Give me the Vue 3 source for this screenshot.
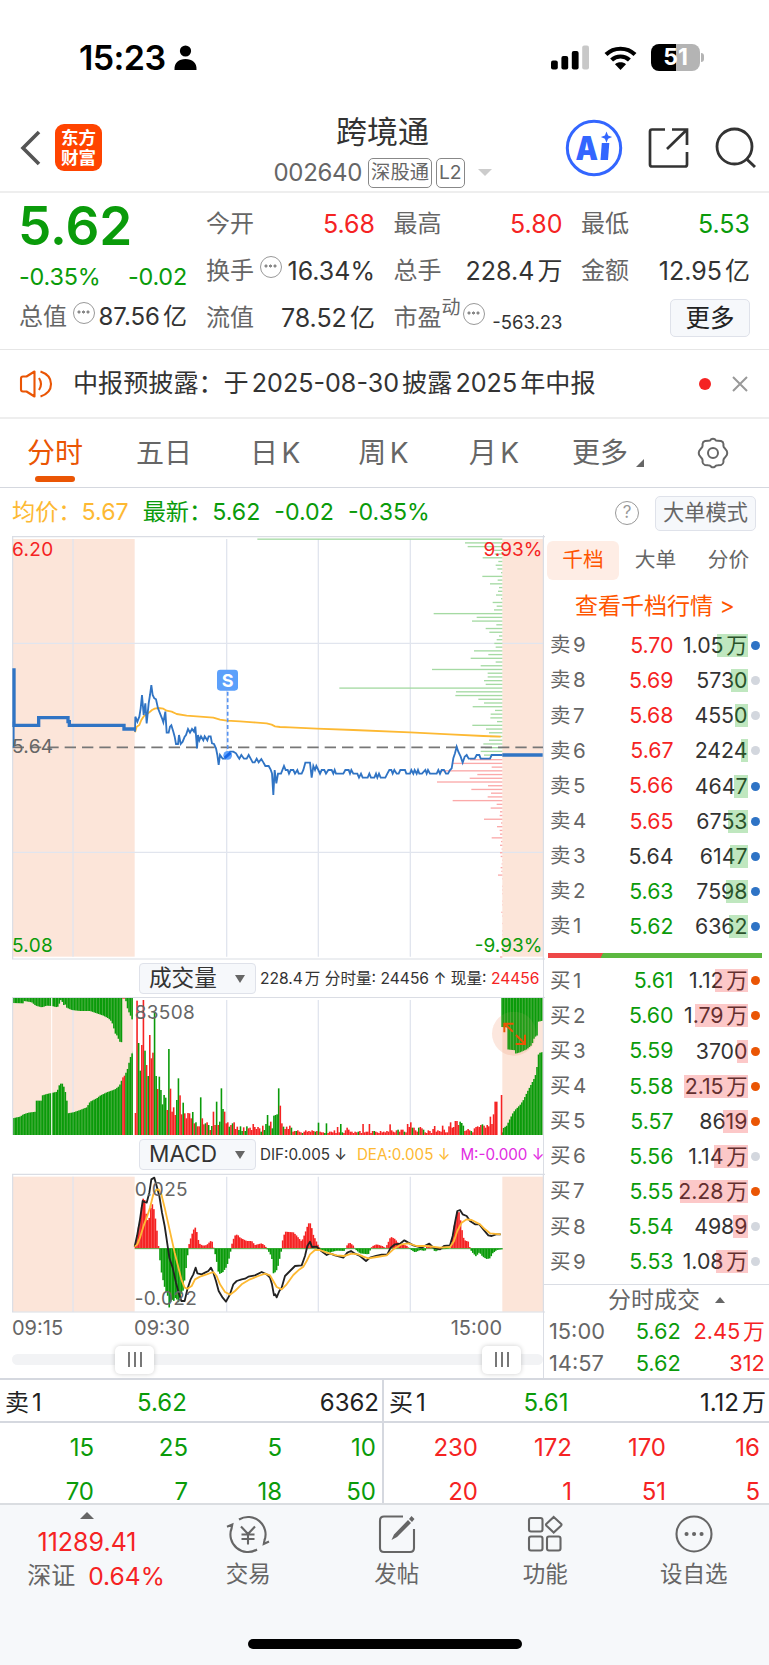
<template>
    <div class="phone">
        <!-- Status bar -->
        <div class="status">
            <div class="status-left">
                <span class="clock">15:23</span>
                <svg width="23" height="25" viewBox="0 0 23 25">
                    <circle cx="11.5" cy="6" r="5.6" />
                    <path d="M0.5 25C0 17.5 5 14 11.5 14S23 17.5 22.5 25Z" />
                </svg>
            </div>
            <div class="status-right">
                <svg width="38" height="25" viewBox="0 0 38 25">
                    <rect x="0" y="15.5" width="6.8" height="9" rx="2" />
                    <rect x="10.4" y="11" width="6.8" height="13.5" rx="2" />
                    <rect x="20.8" y="6" width="6.8" height="18.5" rx="2" />
                    <rect x="31.2" y="0.5" width="6.8" height="24" rx="2" fill="#c8c8c8" />
                </svg>
                <svg class="wifi" width="33" height="24" viewBox="0 0 33 24">
                    <path
                        d="M2 8.6C10 0.8 23 0.8 31 8.6M7.6 14.1C12.6 9.3 20.4 9.3 25.4 14.1"
                        fill="none"
                        stroke="#000"
                        stroke-width="4.2"
                    />
                    <path d="M11 18.2C14 15.6 19 15.6 22 18.2L16.5 24Z" />
                </svg>
                <div class="battery"><span>51</span></div>
                <i class="battery-tip"></i>
            </div>
        </div>

        <!-- Title bar -->
        <header class="header">
            <svg class="back" width="22" height="36" viewBox="0 0 22 36">
                <path d="M19 2L3 18L19 34" fill="none" stroke="#555" stroke-width="3.6" />
            </svg>
            <div class="logo">东方<br />财富</div>
            <div class="title">
                <h1>跨境通</h1>
                <p>
                    <span>002640</span>
                    <b>深股通</b>
                    <b class="lv">L2</b>
                    <i class="tri-down"></i>
                </p>
            </div>
            <svg class="ai" width="58" height="58" viewBox="0 0 58 58">
                <circle cx="29" cy="29" r="26.7" fill="#fff" stroke="#3366ff" stroke-width="3" />
                <text x="10.5" y="41" textLength="22.500" lengthAdjust="spacingAndGlyphs" class="ai-text">A</text>
                <path d="M36.800 24h7.500l-1.300 17h-7.500z" fill="#3366ff" />
                <path d="M41.500 12.500l1.600 4 4 1.600-4 1.600-1.600 4-1.600-4-4-1.600 4-1.600z" fill="#3366ff" />
            </svg>
            <svg class="share" width="42" height="42" viewBox="0 0 42 42">
                <path
                    d="M17 2.5H4Q2 2.5 2 4.5V37.5Q2 39.5 4 39.5H37Q39 39.5 39 37.5V25M24 2.5H39V18M39 2.5L19 22"
                    fill="none"
                    stroke="#333"
                    stroke-width="2.7"
                />
            </svg>
            <svg class="search" width="42" height="42" viewBox="0 0 42 42">
                <circle cx="19.5" cy="19.5" r="17.5" fill="none" stroke="#333" stroke-width="2.8" />
                <path d="M31 31.5L40 40" stroke="#333" stroke-width="3" />
            </svg>
        </header>

        <!-- Quote summary -->
        <section class="quote">
            <div class="quote-main">
                <div class="price">5.62</div>
                <div class="change"><span>-0.35%</span><span>-0.02</span></div>
                <div class="item cap">
                    <label>总值</label><i class="dots"></i><span class="val">87.56亿</span>
                </div>
            </div>
            <div class="quote-grid">
                <div v-for="q in quotes" :key="q.label" class="item">
                    <label>{{ q.label }}<sup v-if="q.sup">{{ q.sup }}</sup></label>
                    <i v-if="q.dots" class="dots"></i>
                    <span class="val" :class="[q.tone, { small: q.small }]">{{ q.value }}</span>
                </div>
                <div class="item"><button class="more">更多</button></div>
            </div>
        </section>

        <!-- Notice -->
        <section class="notice">
            <svg width="34" height="30" viewBox="0 0 34 30">
                <path
                    d="M15.5 2.5V27.5L7.5 22.5H4Q2 22.5 2 20.5V9.5Q2 7.5 4 7.5H7.5ZM20 9Q24 15 20 21M21.500 2.500Q32 6 32 15T21.500 27.500"
                    fill="none"
                    stroke="#ea5504"
                    stroke-width="2.1"
                    stroke-linejoin="round"
                />
            </svg>
            <p>中报预披露：于2025-08-30披露2025年中报</p>
            <i class="unread"></i>
            <svg class="close" width="16" height="16" viewBox="0 0 16 16">
                <path d="M1 1L15 15M15 1L1 15" stroke="#999" stroke-width="2" />
            </svg>
        </section>

        <!-- Period tabs -->
        <nav class="tabs">
            <span v-for="(t, i) in tabs" :key="t" :class="{ active: i === 0 }">{{ t }}</span>
            <i class="corner"></i>
            <svg width="32" height="32" viewBox="0 0 32 32">
                <path
                    d="M11.200 3.800Q13.200 3.800 14 2.400Q16 1 18 2.400Q18.800 3.800 20.800 3.800L24 4Q26.200 4.600 26.500 7Q26 9.500 27.500 11L29.800 14Q30.600 16 29.800 18L27.500 21Q26 22.500 26.500 25Q26.200 27.400 24 28L20.800 28.200Q18.800 28.200 18 29.600Q16 31 14 29.600Q13.200 28.200 11.200 28.200L8 28Q5.800 27.400 5.500 25Q6 22.500 4.500 21L2.200 18Q1.400 16 2.200 14L4.500 11Q6 9.500 5.500 7Q5.800 4.600 8 4Z"
                    fill="none"
                    stroke="#666"
                    stroke-width="2"
                />
                <circle cx="16" cy="16" r="5" fill="none" stroke="#666" stroke-width="2" />
            </svg>
        </nav>

        <div class="info">
            <span class="avg">均价：5.67</span>
            <span>最新：5.62</span>
            <span>-0.02</span>
            <span>-0.35%</span>
            <em>?</em>
            <button>大单模式</button>
        </div>

        <!-- Charts and order book -->
        <section class="body">
            <div class="charts">
                <!-- the charts are drawn in a space three times their displayed size -->
                <svg class="chart-price" viewBox="36 0 1599 1275">
                    <rect x="39" y="12" width="365" height="1253" class="auction" />
                    <rect x="1507" y="12" width="123" height="1253" class="auction" />
                    <path d="M219 12V1265M680 12V1265M955 12V1265M1231 12V1265M38 325H1630M38 952H1630" class="grid" />
                    <path d="M36 5H1635M38 5V1272M36 1272H1635" class="frame" />
                    <path d="M1630 5V1275" class="frame" />
                    <rect v-for="(w, i) in sells" :key="'s' + i" :x="1507 - w" :y="10.5 + i * 11.17" :width="w" height="4" class="depth-sell" />
                    <rect v-for="(w, i) in buys" :key="'b' + i" :x="1507 - w" :y="672 + i * 11.17" :width="w" height="4" class="depth-buy" />
                    <path d="M38 637H1630" class="base" />
                    <polyline :points="avgLine" class="line-avg" />
                    <path d="M42 400V571H116V548H204V560H208V571H372V582H405M1507 660H1628" class="line-thick" />
                    <path d="M41 560V637" class="line-price" />
                    <polyline :points="priceLine" class="line-price" />
                    <path d="M683 470V645" class="mark-line" />
                    <circle cx="683" cy="661" r="13" fill="#5ca0fb" />
                    <path d="M674 669L692 653" stroke="#1768e8" stroke-width="9" />
                    <rect x="651" y="404" width="63" height="63" rx="10" fill="#5ca0fb" />
                    <text x="683" y="456" class="mark">S</text>
                    <text x="36" y="62" class="label up">6.20</text>
                    <text x="36" y="655" class="label">5.64</text>
                    <text x="36" y="1250" class="label down">5.08</text>
                    <text x="1627" y="62" class="label up end">9.93%</text>
                    <text x="1627" y="1250" class="label down end">-9.93%</text>
                </svg>

                <div class="panel-head">
                    <div class="select">成交量<i></i></div>
                    <p class="vol-info">228.4万 分时量: 24456 ↑ 现量: <b>24456</b></p>
                </div>
                <svg class="chart-vol" viewBox="36 126 1599 417">
                    <rect x="39" y="128" width="360" height="412" class="auction" />
                    <rect x="1507" y="128" width="123" height="412" class="auction" />
                    <path d="M219 128V540M680 135V540M955 135V540M1231 135V540" class="grid" />
                    <circle cx="1542" cy="236" r="66" fill="#f5b393" opacity=".22" />
                    <rect v-for="(b, i) in auctionBars" :key="'a' + i" v-bind="b" />
                    <path d="M155 128V540" stroke="#fff" stroke-width="3" />
                    <rect v-for="(b, i) in volumeBars" :key="'v' + i" v-bind="b" />
                    <path d="M36 127H1635M38 127V540M1630 127V540" class="frame" />
                    <circle cx="1542" cy="236" r="66" fill="#f5b393" opacity=".1" />
                    <path d="M1539 230L1513 206M1513 232V206H1541M1548 240L1575 266M1547 267H1575V239" class="expand" />
                    <text x="404" y="192" class="label">83508</text>
                </svg>

                <div class="panel-head">
                    <div class="select">MACD<i></i></div>
                    <p class="macd-info">
                        <span>DIF:0.005 ↓</span><span class="dea">DEA:0.005 ↓</span><span class="m">M:-0.000 ↓</span>
                    </p>
                </div>
                <svg class="chart-macd" viewBox="36 651 1599 420">
                    <rect x="39" y="662" width="365" height="405" class="auction" />
                    <rect x="1507" y="662" width="123" height="405" class="auction" />
                    <path d="M219 662V1067M680 662V1067M955 662V1067M1231 662V1067" class="grid" />
                    <path d="M36 655H1635M38 655V1068M36 1068H1635M1630 655V1068" class="frame" />
                    <rect v-for="(b, i) in macdBars" :key="i" v-bind="b" />
                    <path d="M404 878H1507" stroke="#0a9b0a" stroke-width="2" />
                    <polyline :points="difLine" class="line-dif" />
                    <polyline :points="deaLine" class="line-avg" />
                    <text x="404" y="719" class="label">0.025</text>
                    <text x="404" y="1047" class="label">-0.022</text>
                </svg>

                <div class="times"><span>09:15</span><span>09:30</span><span>15:00</span></div>
                <div class="slider">
                    <div class="thumb"><i></i><i></i><i></i></div>
                    <div class="thumb"><i></i><i></i><i></i></div>
                </div>
            </div>

            <aside class="book">
                <div class="book-tabs"><b>千档</b><span>大单</span><span>分价</span></div>
                <div class="book-link">查看千档行情 &gt;</div>
                <div v-for="r in asks" :key="r[0]" class="row">
                    <label>{{ r[0] }}</label>
                    <span :class="r[2]">{{ r[1] }}</span>
                    <span class="qty">{{ r[3] }}<i :style="{ width: r[4] + 'px' }"></i></span>
                    <i class="dot" :class="{ blue: r[5] }"></i>
                </div>
                <div class="ratio"></div>
                <div v-for="r in bids" :key="r[0]" class="row bid">
                    <label>{{ r[0] }}</label>
                    <span class="down">{{ r[1] }}</span>
                    <span class="qty">{{ r[2] }}<i :style="{ width: r[3] + 'px' }"></i></span>
                    <i class="dot" :class="{ orange: r[4] }"></i>
                </div>
                <div class="deals">
                    <h3>分时成交<i></i></h3>
                    <p><span>15:00</span><span class="down">5.62</span><span class="up">2.45万</span></p>
                    <p><span>14:57</span><span class="down">5.62</span><span class="up">312</span></p>
                </div>
            </aside>
        </section>

        <!-- Queues at best ask and bid -->
        <section class="queues">
            <div v-for="q in queues" :key="q.name" class="queue" :class="q.tone">
                <div class="queue-head">
                    <span>{{ q.name }}</span><span class="down">{{ q.price }}</span><span>{{ q.total }}</span>
                </div>
                <div class="queue-grid">
                    <span v-for="(n, i) in q.list" :key="i">{{ n }}</span>
                </div>
            </div>
        </section>

        <!-- Bottom bar -->
        <footer class="bottom">
            <div class="index">
                <i></i>
                <strong>11289.41</strong>
                <p><span>深证</span>0.64%</p>
            </div>
            <div class="tool">
                <svg width="44" height="40" viewBox="0 0 44 40">
                    <path d="M13 5.500A17.500 17.500 0 0 1 38.300 27M31 35.500A17.500 17.500 0 0 1 5.700 14M1 12.700L6.300 10.500L5.300 15.500M43 27.500L37.800 30L38.700 25M15 12.500L22 20L29 12.500M22 20V30.500M15.500 20.500H28.500M15.500 25H28.500" />
                </svg>
                <span>交易</span>
            </div>
            <div class="tool">
                <svg width="44" height="40" viewBox="0 0 44 40">
                    <path d="M28 2.500H9Q5 2.500 5 6.500V34Q5 38 9 38H35Q39 38 39 34V15" />
                    <path d="M36.500 2L39.500 5L37 8L34 5ZM33 6L36 9L22 23L16.500 26L19 20.500Z" fill="#666" stroke="none" />
                </svg>
                <span>发帖</span>
            </div>
            <div class="tool">
                <svg width="44" height="40" viewBox="0 0 44 40">
                    <rect x="6" y="4" width="13.500" height="13.500" rx="2" />
                    <rect x="6" y="22.500" width="13.500" height="14" rx="2" />
                    <rect x="24" y="22.500" width="13.500" height="14" rx="2" />
                    <path d="M30.700 3L38 9.700Q39 10.700 38 11.700L30.700 18.500L23.500 11.700Q22.500 10.700 23.500 9.700Z" />
                </svg>
                <span>功能</span>
            </div>
            <div class="tool">
                <svg width="44" height="40" viewBox="0 0 44 40">
                    <circle cx="22" cy="20" r="17.500" />
                    <path d="M14.500 20h.1M22 20h.1M29.500 20h.1" stroke-width="4" stroke-linecap="round" />
                </svg>
                <span>设自选</span>
            </div>
            <div class="home"></div>
        </footer>
    </div>
</template>

<script setup>
const RED = "#f52323";
const GREEN = "#0a9b0a";

const tabs = ["分时", "五日", "日K", "周K", "月K", "更多"];

const quotes = [
    { label: "今开", value: "5.68", tone: "up" },
    { label: "最高", value: "5.80", tone: "up" },
    { label: "最低", value: "5.53", tone: "down" },
    { label: "换手", value: "16.34%", dots: true },
    { label: "总手", value: "228.4万" },
    { label: "金额", value: "12.95亿" },
    { label: "流值", value: "78.52亿" },
    { label: "市盈", sup: "动", value: "-563.23", dots: true, small: true },
];

// name, price, tone, quantity, bar width, highlighted dot
const asks = [
    ["卖9", "5.70", "up", "1.05万", 31, true],
    ["卖8", "5.69", "up", "5730", 17, false],
    ["卖7", "5.68", "up", "4550", 13, false],
    ["卖6", "5.67", "up", "2424", 7, false],
    ["卖5", "5.66", "up", "4647", 14, true],
    ["卖4", "5.65", "up", "6753", 20, true],
    ["卖3", "5.64", "flat", "6147", 18, true],
    ["卖2", "5.63", "down", "7598", 22, true],
    ["卖1", "5.62", "down", "6362", 19, true],
];

const bids = [
    ["买1", "5.61", "1.12万", 33, true],
    ["买2", "5.60", "1.79万", 53, true],
    ["买3", "5.59", "3700", 11, true],
    ["买4", "5.58", "2.15万", 64, true],
    ["买5", "5.57", "8619", 25, true],
    ["买6", "5.56", "1.14万", 34, false],
    ["买7", "5.55", "2.28万", 68, true],
    ["买8", "5.54", "4989", 15, false],
    ["买9", "5.53", "1.08万", 32, false],
];

const queues = [
    { name: "卖1", price: "5.62", total: "6362", tone: "green", list: [15, 25, 5, 10, 70, 7, 18, 50] },
    { name: "买1", price: "5.61", total: "1.12万", tone: "red", list: [230, 172, 170, 16, 20, 1, 51, 5] },
];

// --- Order depth, one bar per price step ---
const sells = [
    735, 112, 104, 26, 23, 59, 12, 20, 15, 4, 60, 14, 37, 10, 13, 19, 4, 29, 17, 25, 206, 77, 91, 18, 50, 39, 10, 17,
    24, 20, 85, 42, 95, 20, 65, 211, 44, 44, 55, 50, 489, 139, 141, 72, 55, 89, 22, 35, 36, 16, 90, 49, 40, 37, 40,
    57, 52, 65, 55,
];
const buys = [
    97, 151, 32, 185, 75, 98, 196, 43, 93, 34, 44, 149, 17, 35, 7, 8, 55, 4, 16, 8, 7, 32, 4, 7, 2, 7, 5, 1, 2, 5,
    3, 13, 1, 0, 1, 1, 1, 0, 1, 1, 0, 3, 1, 0, 1, 0, 1, 1, 0, 1, 0, 1, 1, 7,
];

// --- Price and indicator lines ---
const priceLine =
    "405,590 406,545 412,560 418,545 422,520 426,480 431,540 436,505 440,565 446,505 450,480 454,450 458,480 463,490 468,493 474,520 480,535 486,550 490,562 496,530 500,593 506,593 510,575 514,571 520,590 524,605 528,627 534,627 537,600 542,627 548,620 554,605 558,600 564,582 570,593 576,582 582,590 586,575 591,640 594,600 598,616 603,604 610,616 614,604 622,616 626,604 632,604 636,625 642,627 648,640 652,660 656,690 660,660 668,671 676,671 682,660 690,650 700,650 708,655 714,665 718,671 724,660 732,671 740,671 746,660 752,671 758,682 764,682 770,671 776,682 784,672 790,682 796,693 806,693 812,704 816,715 820,780 824,705 829,745 834,716 843,716 852,693 857,705 863,705 867,716 872,705 880,705 885,716 892,705 896,716 905,716 910,705 916,683 930,683 935,728 940,693 945,705 949,693 955,705 960,716 965,705 973,705 978,716 985,705 995,705 1000,716 1004,705 1008,716 1030,716 1036,705 1046,705 1050,716 1054,705 1060,716 1072,716 1077,728 1083,716 1088,728 1103,728 1108,716 1113,728 1123,728 1128,716 1132,728 1137,716 1142,728 1156,728 1162,716 1168,705 1174,705 1178,716 1183,705 1190,716 1196,716 1201,705 1215,705 1219,716 1230,716 1234,705 1240,716 1244,705 1250,716 1254,705 1258,716 1266,716 1276,705 1280,716 1284,705 1290,716 1310,716 1315,705 1320,716 1325,705 1332,705 1338,716 1344,716 1350,705 1355,700 1360,670 1365,655 1370,635 1375,650 1382,665 1388,683 1394,665 1400,660 1406,671 1424,671 1430,660 1438,660 1442,671 1470,671 1475,660 1507,660";
const avgLine =
    "405,592 410,575 418,570 424,555 432,543 440,538 448,532 456,525 464,521 475,519 490,521 500,527 515,530 530,537 560,542 600,545 640,548 660,554 680,557 720,559 760,562 800,565 815,569 825,574 840,576 870,577 950,581 1060,585 1230,592 1350,598 1450,603 1502,605";
const difLine =
    "404,872 412,835 420,790 428,735 434,738 440,740 448,710 454,670 463,665 470,690 478,720 486,770 494,810 500,850 508,905 518,935 528,980 536,1010 544,1035 554,1035 562,1000 572,970 580,955 587,935 592,952 605,955 615,950 625,945 633,935 640,950 648,975 656,1005 668,1025 678,1037 690,1015 700,985 710,975 725,970 735,968 745,962 765,958 785,948 800,955 810,965 816,985 822,1018 826,1015 830,1024 838,1005 845,995 855,960 870,945 885,930 905,928 915,900 922,870 930,857 936,873 950,872 960,882 980,897 990,892 1005,898 1030,905 1042,890 1053,885 1065,893 1080,900 1098,915 1110,905 1128,900 1145,896 1162,895 1172,875 1185,865 1200,863 1213,853 1225,860 1240,868 1265,875 1288,863 1300,875 1320,880 1332,870 1350,868 1358,840 1365,800 1372,765 1380,762 1388,775 1400,780 1410,795 1425,805 1438,805 1450,820 1465,838 1475,840 1488,835 1502,835";
const deaLine =
    "404,872 412,865 420,845 430,812 440,785 450,755 460,715 468,702 476,700 484,715 494,755 504,800 514,845 524,890 534,930 544,970 554,995 562,998 575,990 585,970 600,962 620,955 640,948 650,960 660,985 675,1008 690,1016 705,1005 725,985 750,970 775,960 795,953 810,958 818,972 830,993 845,1000 860,985 880,957 895,943 910,932 920,915 930,895 945,882 960,882 980,890 1010,898 1032,900 1055,893 1075,895 1090,902 1105,907 1130,903 1160,898 1180,880 1205,865 1225,862 1250,870 1280,870 1320,875 1350,873 1362,855 1372,825 1385,800 1400,790 1415,792 1440,805 1455,820 1470,832 1502,835";

// --- Volume per minute: positive is red, negative is green ---
const volume = [
    66, 403, -276, -193, 270, 405, -253, 210, -177, 300, 230, 247, -370, -177, 138, -175, -135, -92, -120, -112, 75,
    -258, 139, 70, 83, 60, -105, -170, 119, 62, -97, 65, 50, 66, 65, 50, -69, 35, -38, 26, 26, -113, 50, 32, -35, 38,
    -30, 15, -27, 70, 30, -100, 30, -40, -140, -78, 70, 35, 38, -25, 30, -35, 38, 18, 25, -15, -26, -12, 23, -12, -26,
    20, 22, 15, 33, 24, 18, 24, 20, -10, 28, -15, -33, -60, -28, 40, -20, -58, -60, -62, -140, 88, 35, -25, 18, 25,
    18, 28, -22, 10, 12, -12, 14, 10, 8, -6, 10, 14, 10, 12, 10, 14, 12, -10, 12, -37, 10, 8, 8, -6, -35, 6, 10, 10, 8,
    14, 6, 24, 8, -33, -8, 6, 14, 22, 16, 10, 10, 6, 10, 8, -10, 12, 6, 33, 8, 10, 10, 33, 6, 12, -12, 10, 8, 6, 12, 8,
    10, 8, 12, 10, 32, 14, 10, 8, 14, -16, 10, 16, 16, -10, 8, 33, 24, 38, -22, 22, 14, 10, -22, 24, 20, -16, 8,
    6, 14, 12, 6, 18, 27, 10, 14, 12, 10, 28, 16, 8, 8, 26, 38, 22, 24, 42, 42, 30, -40, -36, -28, 12, 14, 18, 14, -12,
    8, 20, 24, 26, 24, 30, -32, 28, 22, 30, 26, 55, 33, 62, 100, 100, 0, 0, 120,
];
const step = (1507 - 404) / volume.length;
const volumeBars = volume.map((v, i) => ({
    x: 404 + i * step,
    y: 540 - Math.abs(v),
    width: step,
    height: Math.abs(v),
    fill: v > 0 ? RED : GREEN,
}));

// value of a broken line given as [x, y] pairs
function at(points, x) {
    for (let i = 1; i < points.length; i++) {
        const [x0, y0] = points[i - 1];
        const [x1, y1] = points[i];
        if (x <= x1) return x1 === x0 ? y1 : y0 + ((y1 - y0) * (x - x0)) / (x1 - x0);
    }
    return points[points.length - 1][1];
}

// --- Call auction volumes: bars hang from the top and stand on the bottom ---
const openTop = [
    [37, 144], [70, 145], [73, 138], [95, 142], [107, 152], [125, 157], [140, 152], [155, 153], [172, 157],
    [178, 145], [183, 133], [190, 148], [195, 157], [197, 133], [200, 158], [215, 165], [240, 168], [270, 168],
    [290, 175], [310, 182], [325, 190], [335, 200], [340, 215], [345, 235], [352, 243], [358, 260], [366, 262],
    [367, 131], [375, 131], [380, 145], [383, 165], [390, 178], [395, 193], [399, 193],
];
const openBottom = [
    [37, 490], [60, 485], [70, 478], [85, 473], [108, 470], [109, 437], [123, 437], [124, 422], [140, 417],
    [172, 410], [174, 398], [180, 386], [190, 386], [191, 395], [195, 397], [197, 437], [201, 437], [202, 475],
    [220, 472], [240, 465], [260, 457], [270, 440], [290, 430], [300, 422], [320, 412], [345, 403], [355, 395],
    [362, 385], [366, 370], [375, 360], [383, 340], [388, 318], [393, 300], [399, 290],
];
const closeTop = [
    [1504, 216], [1520, 217], [1521, 283], [1546, 286], [1547, 296], [1560, 292], [1580, 283], [1595, 270],
    [1603, 247], [1613, 240], [1615, 200], [1628, 197],
];
const closeBottom = [
    [1504, 540], [1509, 520], [1520, 512], [1528, 495], [1538, 475], [1545, 465], [1560, 450], [1570, 435],
    [1582, 410], [1595, 385], [1605, 365], [1610, 343], [1614, 300], [1620, 293], [1628, 291],
];
const auctionBars = [];
function addAuction(top, bottom, from, to) {
    for (let x = from; x < to; x += 4.55) {
        const t = at(top, x + 2);
        const b = at(bottom, x + 2);
        const fill = x > 364 && x < 374 ? RED : GREEN;
        const width = Math.min(4.7, to - x);
        auctionBars.push({ x, y: 128, width, height: t - 128, fill });
        auctionBars.push({ x, y: b, width, height: 540 - b, fill });
    }
}
addAuction(openTop, openBottom, 39, 399);
addAuction(closeTop, closeBottom, 1504, 1628);

// --- MACD histogram ---
const macd = [
    [404, 0], [412, 45], [420, 85], [428, 150], [434, 145], [440, 90], [446, 80], [452, 120], [458, 135],
    [464, 105], [470, 60], [476, 0], [478, -20], [484, -70], [490, -100], [496, -125], [504, -145], [508, -182],
    [514, -150], [520, -160], [528, -145], [534, -165], [542, -140], [550, -125], [558, -60], [564, -10], [566, 8],
    [572, 30], [580, 55], [588, 65], [593, 30], [600, 12], [610, 8], [620, 10], [635, 25], [640, 5], [643, -5],
    [650, -40], [656, -78], [668, -72], [680, -55], [690, -20], [693, 0], [697, 18], [704, 38], [712, 42],
    [720, 32], [740, 22], [755, 22], [765, 10], [785, 15], [795, 8], [800, 0], [805, -8], [815, -25], [820, -75],
    [828, -70], [835, -50], [842, -15], [846, 0], [848, 25], [855, 50], [880, 48], [890, 38], [905, 20], [915, 45],
    [925, 75], [932, 75], [940, 40], [955, 8], [960, 0], [962, -5], [990, -12], [1010, -7], [1035, -8], [1038, 5],
    [1048, 18], [1060, 8], [1065, 0], [1068, -5], [1080, -15], [1105, -18], [1113, 0], [1116, 6], [1130, 12],
    [1150, 6], [1155, 0], [1162, 12], [1172, 35], [1185, 28], [1195, 15], [1220, 8], [1228, 0], [1234, -5],
    [1245, -12], [1260, -5], [1275, -8], [1280, 4], [1290, 12], [1298, 0], [1305, -10], [1320, -3], [1340, -2],
    [1350, 0], [1355, 20], [1365, 80], [1372, 110], [1378, 108], [1385, 60], [1392, 25], [1405, 20], [1410, 0],
    [1415, -10], [1428, -24], [1438, -12], [1448, -25], [1460, -32], [1470, -30], [1478, -15], [1490, -5],
    [1505, -3],
];
const macdBars = Array.from({ length: 240 }, (_, i) => {
    const x = 404 + i * 4.6;
    const h = at(macd, x + 2.3);
    return { x, y: h > 0 ? 877 - h : 877, width: 4.9, height: Math.abs(h), fill: h > 0 ? RED : GREEN };
});
</script>

<style>
body { background: #fff; }
</style>

<style scoped>
* { box-sizing: border-box; }

.phone {
    width: 769px;
    height: 1665px;
    overflow: hidden;
    display: flex;
    flex-direction: column;
    font-family: Inter, "Noto Sans CJK SC", sans-serif;
    text-autospace: normal;
    font-size: 24px;
    line-height: 1;
    color: #333;
    background: #fff;
}

h1, h3, p { margin: 0; font-weight: 400; }
b, i, em, strong { font-weight: 400; font-style: normal; }
svg { display: block; flex: none; }
button { font: inherit; color: inherit; padding: 0; background: #f6f8fb; border: 1.5px solid #dfe2ea; border-radius: 5px; }

.up { color: #f52323; }
.down { color: #0a9b0a; }
.flat { color: #333; }

/* --- Status bar --- */
.status {
    height: 100px;
    padding: 15px 65px 0 79px;
    display: flex;
    justify-content: space-between;
    align-items: center;
}
.status-left, .status-right { display: flex; align-items: center; }
.clock { font-size: 34px; font-weight: 600; color: #000; letter-spacing: -0.6px; margin-right: 9px; }
.wifi { margin: 0 14px 0 15px; }
.battery {
    width: 49px;
    height: 27px;
    border-radius: 8px;
    background: linear-gradient(90deg, #000 51%, #b4b4b4 51%);
    color: #fff;
    font-size: 23px;
    font-weight: 700;
    line-height: 27px;
    text-align: center;
}
.battery-tip { width: 3px; height: 9px; margin-left: 1px; border-radius: 0 4px 4px 0; background: #b4b4b4; }

/* --- Header --- */
.header {
    height: 93px;
    flex: none;
    border-bottom: 2px solid #eee;
    display: flex;
    align-items: center;
    padding: 4px 12px 0 20px;
}
.logo {
    width: 47px;
    height: 47px;
    margin-left: 13px;
    border-radius: 9px;
    background: #ff4400;
    color: #fff;
    font-size: 17.5px;
    font-weight: 700;
    line-height: 19.5px;
    padding-top: 4px;
    text-align: center;
}
.title { width: 420px; margin: 7px 0 0 71px; display: flex; flex-direction: column; align-items: center; }
.title h1 { font-size: 31px; line-height: 38px; }
.title p { display: flex; align-items: center; height: 34px; color: #666; margin-top: 5px; width: 218px; }
.title b {
    font-size: 19.3px;
    height: 30px;
    line-height: 27px;
    padding: 0 2px;
    border: 1.5px solid #888;
    border-radius: 5px;
    margin-left: 6px;
    flex: none;
}
.title .lv { margin-left: 4px; }
.tri-down { border: 7px solid transparent; border-top-color: #ccc; border-bottom: 0; margin-left: 13px; flex: none; }
.title span { letter-spacing: -0.3px; }
.ai { margin-left: -27px; }
.ai-text { font: 900 33px Inter, sans-serif; fill: #3366ff; }
.share { margin-left: 25px; }
.search { margin-left: 25px; }

/* --- Quote --- */
.quote { height: 157px; flex: none; display: flex; padding: 0 18px 0 19px; border-bottom: 1.5px solid #e6e6e6; }
.quote-main { width: 168px; margin-right: 19px; color: #0a9b0a; }
.price { font-size: 53px; font-weight: 600; line-height: 67px; height: 69px; margin-left: -1px; }
.change { display: flex; justify-content: space-between; line-height: 30px; height: 33px; font-size: 23.4px; letter-spacing: -0.2px; }
.quote-grid {
    flex: 1;
    display: grid;
    grid-template-columns: repeat(3, 169px);
    column-gap: 18.5px;
    grid-template-rows: 54px 40px 54px;
    align-items: center;
    padding-top: 4px;
}
.item { display: flex; align-items: center; height: 40px; color: #333; white-space: nowrap; }
.item label { color: #666; }
.item sup { font-size: 19px; position: relative; top: -3px; line-height: 0; }
.item .val { margin-left: auto; }
.quote-grid .val { font-size: 25px; }
.item .up { color: #f52323; }
.item .down { color: #0a9b0a; }
.quote-grid .small { font-size: 18.500px; margin-top: 8px; }
.cap { margin-top: 2px; }
.dots {
    width: 22px;
    height: 22px;
    flex: none;
    border: 1.7px solid #999;
    border-radius: 50%;
    margin: -9px 0 0 6px;
    background:
        radial-gradient(circle at 5px 9px, #888 1.3px, transparent 1.8px),
        radial-gradient(circle at 9.500px 9px, #888 1.3px, transparent 1.8px),
        radial-gradient(circle at 14px 9px, #888 1.3px, transparent 1.8px);
}
label:has(sup) + .dots { margin-left: 2px; }
.more { width: 80px; height: 38px; margin-left: auto; font-size: 24.5px; line-height: 33px; color: #222; }

/* --- Notice --- */
.notice { height: 69px; flex: none; display: flex; align-items: center; padding: 0 21px 0 19px; border-bottom: 2px solid #eee; }
.notice p { font-size: 25.1px; margin-left: 20px; white-space: nowrap; }
.unread { width: 12px; height: 12px; border-radius: 50%; background: #f52323; margin-left: auto; margin-right: 21px; }

/* --- Tabs --- */
.tabs { height: 69px; flex: none; display: flex; align-items: center; border-bottom: 1.5px solid #d5d8df; padding-left: 27px; color: #666; font-size: 28px; }
.tabs span { height: 69px; line-height: 69px; position: relative; margin-right: 53px; white-space: nowrap; }
.tabs span:nth-child(2) { margin-right: 58px; }
.tabs span:nth-child(3) { margin-right: 58px; }
.tabs span:nth-child(4) { margin-right: 60px; }
.tabs span:nth-child(6) { margin-right: 8px; }
.tabs .active { color: #ea5504; }
.tabs .active::after { content: ""; position: absolute; left: 8px; bottom: 6px; width: 40px; height: 6px; border-radius: 3px; background: #ea5504; }
.corner { border-left: 8px solid transparent; border-bottom: 8px solid #666; margin-top: 20px; }
.tabs svg { margin-left: auto; margin-right: 40px; }

.info { height: 47px; flex: none; display: flex; align-items: center; padding: 3px 13px 0 12px; color: #0a9b0a; white-space: nowrap; font-size: 23.2px; }
.info span { margin-right: 14px; }
.info .avg { color: #fdb933; }
.info em { width: 24px; height: 24px; border: 1.7px solid #999; border-radius: 50%; color: #999; font-size: 17px; line-height: 21px; text-align: center; margin-left: auto; }
.info button { width: 101px; height: 35px; font-size: 21.2px; color: #666; margin-left: 16px; }

/* --- Charts --- */
.body { display: flex; height: 845px; flex: none; border-bottom: 2px solid #d5d8df; }
.charts { width: 533px; margin-left: 12px; flex: none; }
.chart-price { width: 533px; height: 425px; }
.chart-vol { width: 533px; height: 139px; }
.chart-macd { width: 533px; height: 140px; }
.auction { fill: #fce5d9; }
.grid { stroke: #e1e5ee; stroke-width: 4; fill: none; }
.frame { stroke: #dadde4; stroke-width: 3.5; fill: none; }
.depth-sell { fill: #a5daa3; }
.depth-buy { fill: #fba9a9; }
.base { stroke: #777; stroke-width: 5; stroke-dasharray: 34 18; fill: none; }
.line-price { stroke: #3074c4; stroke-width: 5.5; fill: none; }
.line-thick { stroke: #3074c4; stroke-width: 10; fill: none; }
.line-avg { stroke: #fdb933; stroke-width: 5.5; fill: none; stroke-linejoin: round; }
.line-dif { stroke: #222; stroke-width: 5.5; fill: none; stroke-linejoin: round; }
.mark-line { stroke: #5794f2; stroke-width: 5; stroke-dasharray: 12 8; }
.mark { fill: #fff; font-size: 54px; font-weight: 700; text-anchor: middle; }
.expand { stroke: #ea5504; stroke-width: 6; fill: none; }
.label { font-size: 57px; fill: #666; letter-spacing: 1px; }
.label.up { fill: #f52323; }
.label.down { fill: #0a9b0a; }
.label.end { text-anchor: end; letter-spacing: 0; }

.panel-head { height: 37px; display: flex; align-items: center; padding-left: 127px; white-space: nowrap; border-right: 1.5px solid #dadde4; margin-right: 1px; }
.select {
    width: 117px;
    height: 31px;
    flex: none;
    border: 1.5px solid #dfe2ea;
    border-radius: 4px;
    background: #f6f8fb;
    font-size: 22.6px;
    display: flex;
    align-items: center;
    padding: 0 10px 0 9px;
    justify-content: space-between;
}
.select i { border: 5px solid transparent; border-top: 8px solid #666; border-bottom: 0; }
.panel-head p { font-size: 15.6px; margin-left: 4px; }
.vol-info b { color: #f52323; }
.panel-head .macd-info { font-size: 15.2px; }
.macd-info span { margin-right: 10px; }
.macd-info .dea { color: #fdb933; }
.macd-info .m { color: #e22be2; margin: 0; }

.times { display: flex; height: 29px; align-items: center; font-size: 20px; color: #666; }
.times span:nth-child(2) { margin-left: 71px; }
.times span:nth-child(3) { margin-left: auto; margin-right: 43px; }
.slider {
    width: 531px;
    height: 11px;
    margin-top: 12px;
    border-radius: 6px;
    background: #f2f3f5;
    display: flex;
    justify-content: space-between;
    align-items: center;
    padding: 0 22px 0 103px;
}
.thumb { width: 39px; height: 28px; border-radius: 5px; background: #fff; box-shadow: 0 0 5px rgba(0, 0, 0, 0.2); display: flex; gap: 4px; align-items: center; justify-content: center; }
.thumb i { width: 2px; height: 15px; background: #777; }

/* --- Order book --- */
.book { flex: 1; color: #333; font-size: 21.3px; white-space: nowrap; margin-left: -2px; border-left: 1.5px solid #dadde4; }
.book-tabs { display: flex; margin: 6px 0 0 3px; height: 39px; font-size: 20.7px; line-height: 37px; text-align: center; color: #666; }
.book-tabs b { width: 72px; background: #feede5; border-radius: 6px; color: #ff5500; }
.book-tabs span { width: 73px; }
.book-link { height: 48px; line-height: 52px; font-size: 23px; color: #ff5500; padding-left: 31px; }
.row { height: 35.15px; display: flex; align-items: center; padding-left: 6px; }
.row label { width: 51.5px; color: #666; font-size: 20.5px; }
.row > span { width: 72px; text-align: right; }
.row > .qty { width: 74px; position: relative; line-height: 23px; display: flex; justify-content: flex-end; }
.qty i { position: absolute; right: 0; top: 0; height: 23px; background: rgba(20, 165, 20, 0.27); }
.bid .qty i { background: rgba(245, 35, 35, 0.25); }
.dot { width: 9px; height: 9px; border-radius: 50%; background: #d3d7de; margin-left: 3.5px; }
.dot.blue { background: #2e73c5; }
.dot.orange { background: #ea5504; }
.ratio { height: 5px; width: 214px; margin: 9px 0 5px 4px; background: linear-gradient(120deg, #ee4848 25.5%, #5cb840 25.500%); }
.deals { border-top: 1.5px solid #dadde4; margin-top: 4px; padding: 0 11px 0 5px; }
.deals h3 { font-size: 23px; line-height: 31px; color: #666; padding-left: 59px; }
.deals h3 i { display: inline-block; border: 5px solid transparent; border-bottom: 6px solid #666; border-top: 0; margin-left: 15px; vertical-align: 5px; }
.deals p { display: flex; height: 32px; align-items: center; color: #666; font-size: 21.800px; }
.deals span:nth-child(2) { margin-left: auto; width: 76px; text-align: right; }
.deals span:nth-child(3) { width: 84px; text-align: right; }

/* --- Queues --- */
.queues { display: flex; height: 123px; flex: none; }
.queue { width: 382px; height: 123px; }
.queue.red { width: 387px; border-left: 2px solid #d5d8df; }
.queue-head { height: 43px; display: grid; grid-template-columns: 90px 134px 1fr; align-items: center; border-bottom: 2px solid #d5d8df; padding: 4px 3px 0 5px; color: #222; }
.queue-head span:nth-child(2) { text-align: center; }
.queue-head span:nth-child(3) { text-align: right; }
.queue-grid { display: grid; grid-template-columns: repeat(4, 94px); grid-auto-rows: 22px; row-gap: 22px; padding-top: 14px; line-height: 22px; text-align: right; }
.green .queue-grid { color: #0a9b0a; }
.red .queue-grid { color: #f52323; }

/* --- Bottom bar --- */
.bottom { position: relative; flex: 1; background: #f6f8fa; border-top: 2px solid #dadde1; display: flex; color: #666; }
.index { width: 174px; display: flex; flex-direction: column; align-items: center; color: #f52323; padding-top: 7px; }
.index i { border: 7px solid transparent; border-bottom-color: #666; border-top: 0; }
.index strong { margin-top: 10px; line-height: 26px; font-size: 25px; }
.index p { margin-top: 9px; display: flex; align-items: center; padding-left: 18px; font-size: 24.600px; }
.index p span { color: #666; margin-right: 13px; font-size: 24px; }
.tool { width: 148.5px; display: flex; flex-direction: column; align-items: center; padding-top: 9px; font-size: 22.5px; }
.tool svg { margin-bottom: 9px; fill: none; stroke: #666; stroke-width: 2.1; }
.home { position: absolute; left: 248px; bottom: 16px; width: 274px; height: 10px; border-radius: 5px; background: #000; }
</style>
